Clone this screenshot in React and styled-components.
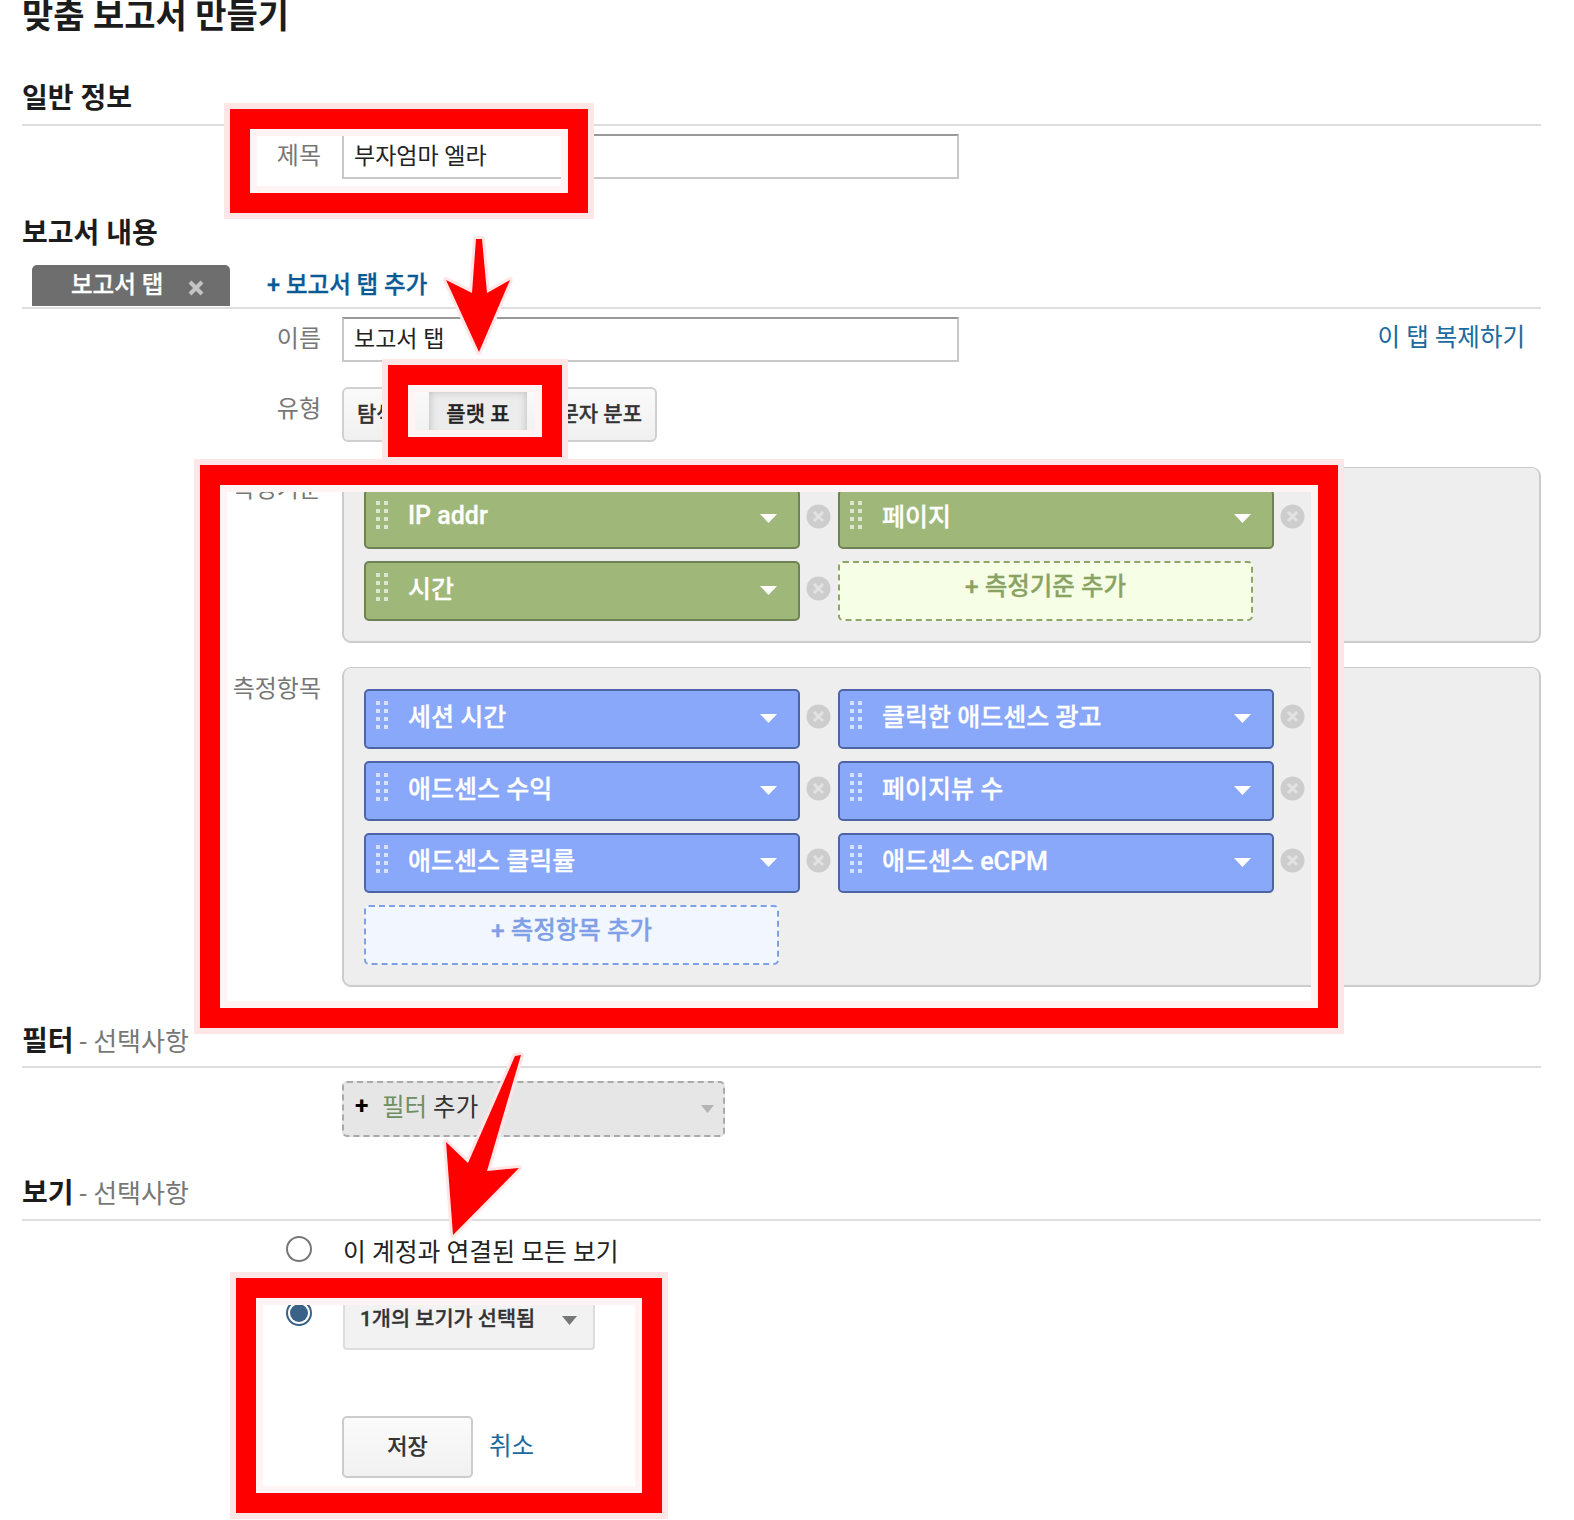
import React from 'react';
import styled, { createGlobalStyle } from 'styled-components';

const GlobalStyle = createGlobalStyle`
  html, body { margin: 0; padding: 0; background: #fff; }
  body { font-family: Roboto, "Noto Sans CJK KR", "Noto Sans", sans-serif; color: #222; }
`;

const Page = styled.div`
  position: relative;
  width: 1574px;
  height: 1520px;
  box-sizing: border-box;
  padding: 0 33px 0 22px;
  overflow: hidden;
`;

const Title = styled.h1`
  margin: 0;
  height: 32px;
  font-size: 34px;
  line-height: 32px;
  font-weight: 700;
  color: #1c1c1c;
`;

const SectionHead = styled.h2`
  margin: ${p => p.$top}px 0 0;
  padding-bottom: ${p => (p.$plain ? 0 : 6.5)}px;
  border-bottom: ${p => (p.$plain ? 'none' : '2px solid #ddd')};
  font-size: 28px;
  line-height: 36px;
  font-weight: 700;
  color: #1c1c1c;
`;

const Optional = styled.span`
  margin-left: 6px;
  font-size: 26px;
  font-weight: 400;
  color: #777;
`;

const FormRow = styled.div`
  display: grid;
  grid-template-columns: 299px 1fr;
  column-gap: 21px;
  margin-top: ${p => p.$top}px;
`;

const Label = styled.div`
  text-align: right;
  font-size: 24px;
  line-height: 44px;
  color: #777;
`;

const FieldLine = styled.div`
  display: flex;
  align-items: flex-start;
  justify-content: space-between;
  padding-right: 16px;
`;

const TextField = styled.div`
  box-sizing: border-box;
  width: 617px;
  height: 45px;
  padding-left: 10px;
  border: 2px solid #c8c8c8;
  border-top-color: #999;
  font-size: 23px;
  line-height: 41px;
  color: #222;
`;

const Link = styled.a`
  font-size: 24.5px;
  line-height: 42px;
  color: #1a6a9e;
`;

const TabBar = styled.div`
  display: flex;
  align-items: flex-start;
  margin-top: 13px;
  padding: 0 0 1px 10px;
  border-bottom: 2px solid #ddd;
`;

const Tab = styled.div`
  box-sizing: border-box;
  display: flex;
  align-items: flex-start;
  gap: 25px;
  width: 198px;
  height: 41px;
  padding-left: 39px;
  border-radius: 5px 5px 0 0;
  background: #6e6e6e;
  font-size: 23.5px;
  font-weight: 500;
  -webkit-text-stroke: 0.3px;
  line-height: 41px;
  color: #fff;
`;

const TabClose = styled.svg`
  margin-top: 15px;
`;

const AddTab = styled.a`
  margin-left: 37px;
  font-size: 23.5px;
  font-weight: 500;
  -webkit-text-stroke: 0.3px;
  line-height: 41px;
  color: #0b5a96;
`;

const TypeGroup = styled.div`
  box-sizing: border-box;
  display: flex;
  align-items: center;
  width: 315px;
  height: 55px;
  border: 2px solid #d0d0d0;
  border-radius: 6px;
  background: linear-gradient(#fafafa, #f0f0f0);
`;

const TypeButton = styled.div`
  box-sizing: border-box;
  height: 47px;
  font-size: 21px;
  line-height: 47px;
  font-weight: 500;
  -webkit-text-stroke: 0.3px;
  white-space: nowrap;
  color: #333;
  ${p => p.$width ? `width: ${p.$width}px;` : 'flex: 1;'}
  display: flex;
  justify-content: ${p => p.$align || 'center'};
  padding: 0 ${p => p.$pad || 0}px;
  ${p => p.$active && `
    background: #ececec;
    box-shadow: inset 0 0 9px #b8b8b8;
    color: #222;
  `}
`;

const Panel = styled.div`
  box-sizing: border-box;
  padding: 21px 20px 20px;
  border: 2px solid #ccc;
  border-top-width: 1px;
  border-radius: 9px;
  background: #eeeeee;
`;

const ChipGrid = styled.div`
  display: grid;
  grid-template-columns: 474px 474px;
  row-gap: 12px;
`;

const ChipCell = styled.div`
  display: flex;
  align-items: center;
`;

const Chip = styled.div`
  box-sizing: border-box;
  display: flex;
  align-items: center;
  width: 436px;
  height: 60px;
  padding: 0 21px 0 10px;
  border-radius: 5px;
  border: 2px solid ${p => (p.$kind === 'green' ? '#6f8255' : '#4d66a3')};
  background: ${p => (p.$kind === 'green' ? '#9fb779' : '#8aa8fa')};
  font-size: 25px;
  font-weight: 500;
  -webkit-text-stroke: 0.3px;
  color: #fff;
`;

const ChipText = styled.span`
  flex: 1;
  margin: 0 0 7px 20px;
  white-space: nowrap;
`;

const HandleIcon = styled.svg`
  margin-bottom: 5px;
`;

const RemoveButton = styled.div`
  display: flex;
  margin: -4px 0 0 6px;
`;

const AddChip = styled.div`
  box-sizing: border-box;
  width: 415px;
  height: 60px;
  border-radius: 5px;
  border: 2px dashed ${p => (p.$kind === 'green' ? '#8da568' : '#7f9fe6')};
  background: ${p => (p.$kind === 'green' ? '#f6ffe6' : '#f2f6ff')};
  color: ${p => (p.$kind === 'green' ? '#8aa364' : '#7f9fe6')};
  font-size: 24.5px;
  font-weight: 500;
  -webkit-text-stroke: 0.3px;
  line-height: 47px;
  text-align: center;
`;

const FilterBox = styled.div`
  box-sizing: border-box;
  display: flex;
  align-items: center;
  width: 383px;
  height: 56px;
  padding: 0 9px 8px 11px;
  border: 2px dashed #aaa;
  border-radius: 5px;
  background: #e6e6e6;
  font-size: 24.5px;
  color: #333;
`;

const FilterPlus = styled.span`
  width: 27px;
  font-weight: 700;
  color: #000;
`;

const FilterWord = styled.span`
  margin-right: 6px;
  color: #6f8f63;
`;

const Caret = styled.svg`
  margin-left: auto;
  margin-top: ${p => p.$top}px;
`;

const RadioRow = styled.div`
  display: grid;
  grid-template-columns: 233px 26px 1fr;
  column-gap: 31px;
  margin-top: ${p => p.$top}px;
`;

const RadioCell = styled.div`
  grid-column: 2;
  box-sizing: border-box;
  display: flex;
  align-items: center;
  justify-content: center;
  width: 26px;
  height: 26px;
  border: 2px solid ${p => (p.$checked ? '#3a6186' : '#777')};
  border-radius: 50%;
  background: #fff;
  &::after {
    content: '';
    display: ${p => (p.$checked ? 'block' : 'none')};
    width: 18px;
    height: 18px;
    border-radius: 50%;
    background: #3a6186;
  }
`;

const RadioLabel = styled.div`
  grid-column: 3;
  font-size: 24.8px;
  line-height: 34px;
  color: #222;
`;

const ViewSelect = styled.div`
  grid-column: 3;
  box-sizing: border-box;
  display: flex;
  align-items: center;
  width: 252px;
  height: 50px;
  padding: 0 16px 13px 15px;
  border: 2px solid #ddd;
  border-top: none;
  border-radius: 0 0 4px 4px;
  background: #f2f2f2;
  font-size: 20.8px;
  font-weight: 500;
  -webkit-text-stroke: 0.3px;
  color: #333;
`;

const ActionRow = styled.div`
  display: flex;
  align-items: center;
  gap: 16px;
  margin: 66px 0 0 320px;
`;

const SaveButton = styled.div`
  box-sizing: border-box;
  width: 131px;
  height: 62px;
  border: 2px solid #ccc;
  border-radius: 5px;
  background: linear-gradient(#fbfbfb, #f1f1f1);
  font-size: 22px;
  font-weight: 500;
  -webkit-text-stroke: 0.2px;
  line-height: 57px;
  text-align: center;
  color: #333;
`;

const Highlight = styled.div`
  position: absolute;
  left: ${p => p.$x}px;
  top: ${p => p.$y}px;
  width: ${p => p.$w}px;
  height: ${p => p.$h}px;
  box-sizing: border-box;
  border: 20px solid #ff0000;
  box-shadow: 0 0 0 6px #ffe6e6, inset 0 0 0 7px #fff3f3;
`;

const ArrowLayer = styled.svg`
  position: absolute;
  left: 0;
  top: 0;
`;

const DragHandle = () => (
  <HandleIcon width="12" height="32" viewBox="0 0 12 32">
    {[0, 8, 16, 24].map(y => [0, 8].map(x => (
      <rect key={`${x}-${y}`} x={x} y={y + 1} width="4" height="4" fill="#fff" opacity="0.65" />
    )))}
  </HandleIcon>
);

const ChipCaret = () => (
  <svg width="17" height="9" viewBox="0 0 17 9">
    <path d="M0 0H17L8.5 9Z" fill="#fff" />
  </svg>
);

const RemoveIcon = () => (
  <RemoveButton>
    <svg width="25" height="25" viewBox="0 0 25 25">
      <circle cx="12.5" cy="12.5" r="12" fill="#cdcdcd" />
      <path d="M8 8L17 17M17 8L8 17" stroke="#e2e2e2" strokeWidth="3" />
    </svg>
  </RemoveButton>
);

const DataChip = ({ kind, text }) => (
  <ChipCell>
    <Chip $kind={kind}>
      <DragHandle />
      <ChipText>{text}</ChipText>
      <ChipCaret />
    </Chip>
    <RemoveIcon />
  </ChipCell>
);

const dimensions = ['IP addr', '페이지', '시간'];
const metrics = ['세션 시간', '클릭한 애드센스 광고', '애드센스 수익', '페이지뷰 수', '애드센스 클릭률', '애드센스 eCPM'];

const App = () => {
  return (
    <Page>
      <GlobalStyle />
      <Title>맞춤 보고서 만들기</Title>

      <SectionHead $top={49}>일반 정보</SectionHead>
      <FormRow $top={8}>
        <Label>제목</Label>
        <TextField>부자엄마 엘라</TextField>
      </FormRow>

      <SectionHead $top={37} $plain>보고서 내용</SectionHead>
      <TabBar>
        <Tab>
          보고서 탭
          <TabClose width="16" height="16" viewBox="0 0 16 16">
            <path d="M2 2L14 14M14 2L2 14" stroke="#c4c4c4" strokeWidth="4" />
          </TabClose>
        </Tab>
        <AddTab>+ 보고서 탭 추가</AddTab>
      </TabBar>
      <FormRow $top={8}>
        <Label>이름</Label>
        <FieldLine>
          <TextField>보고서 탭</TextField>
          <Link>이 탭 복제하기</Link>
        </FieldLine>
      </FormRow>
      <FormRow $top={25}>
        <Label>유형</Label>
        <TypeGroup>
          <TypeButton $width={85} $pad={13} $align="flex-start">탐색기</TypeButton>
          <TypeButton $width={99} $active>플랫 표</TypeButton>
          <TypeButton $pad={13} $align="flex-end">방문자 분포</TypeButton>
        </TypeGroup>
      </FormRow>
      <FormRow $top={25}>
        <Label>측정기준</Label>
        <Panel>
          <ChipGrid>
            {dimensions.map(name => <DataChip key={name} kind="green" text={name} />)}
            <AddChip $kind="green">+ 측정기준 추가</AddChip>
          </ChipGrid>
        </Panel>
      </FormRow>
      <FormRow $top={24}>
        <Label>측정항목</Label>
        <Panel>
          <ChipGrid>
            {metrics.map(name => <DataChip key={name} kind="blue" text={name} />)}
            <AddChip $kind="blue">+ 측정항목 추가</AddChip>
          </ChipGrid>
        </Panel>
      </FormRow>

      <SectionHead $top={37}>필터<Optional>- 선택사항</Optional></SectionHead>
      <FormRow $top={13}>
        <div />
        <FilterBox>
          <FilterPlus>+</FilterPlus>
          <FilterWord>필터</FilterWord>
          추가
          <Caret $top={8} width="13" height="8" viewBox="0 0 13 8">
            <path d="M0 0H13L6.5 8Z" fill="#b4b4b4" />
          </Caret>
        </FilterBox>
      </FormRow>

      <SectionHead $top={39}>보기<Optional>- 선택사항</Optional></SectionHead>
      <RadioRow $top={15}>
        <RadioCell />
        <RadioLabel>이 계정과 연결된 모든 보기</RadioLabel>
      </RadioRow>
      <RadioRow $top={30}>
        <RadioCell $checked />
        <ViewSelect>
          1개의 보기가 선택됨
          <Caret $top={6} width="15" height="9" viewBox="0 0 15 9">
            <path d="M0 0H15L7.5 9Z" fill="#777" />
          </Caret>
        </ViewSelect>
      </RadioRow>
      <ActionRow>
        <SaveButton>저장</SaveButton>
        <Link>취소</Link>
      </ActionRow>

      <Highlight $x={230} $y={109} $w={358} $h={104} />
      <Highlight $x={388} $y={365} $w={174} $h={92} />
      <Highlight $x={200} $y={465} $w={1138} $h={563} />
      <Highlight $x={236} $y={1278} $w={426} $h={235} />

      <ArrowLayer width="1574" height="1520" viewBox="0 0 1574 1520">
        <g fill="#ff0000" stroke="#ffe6e6" strokeWidth="6" strokeLinejoin="round" paintOrder="stroke">
          <path d="M476 239L482 239L487 293L510 280L479 352L446 280L472 293Z" />
          <path d="M515 1056L521 1055L487 1171L519 1168L453 1235L446 1142L468 1163Z" />
        </g>
      </ArrowLayer>
    </Page>
  );
};

export default App;
